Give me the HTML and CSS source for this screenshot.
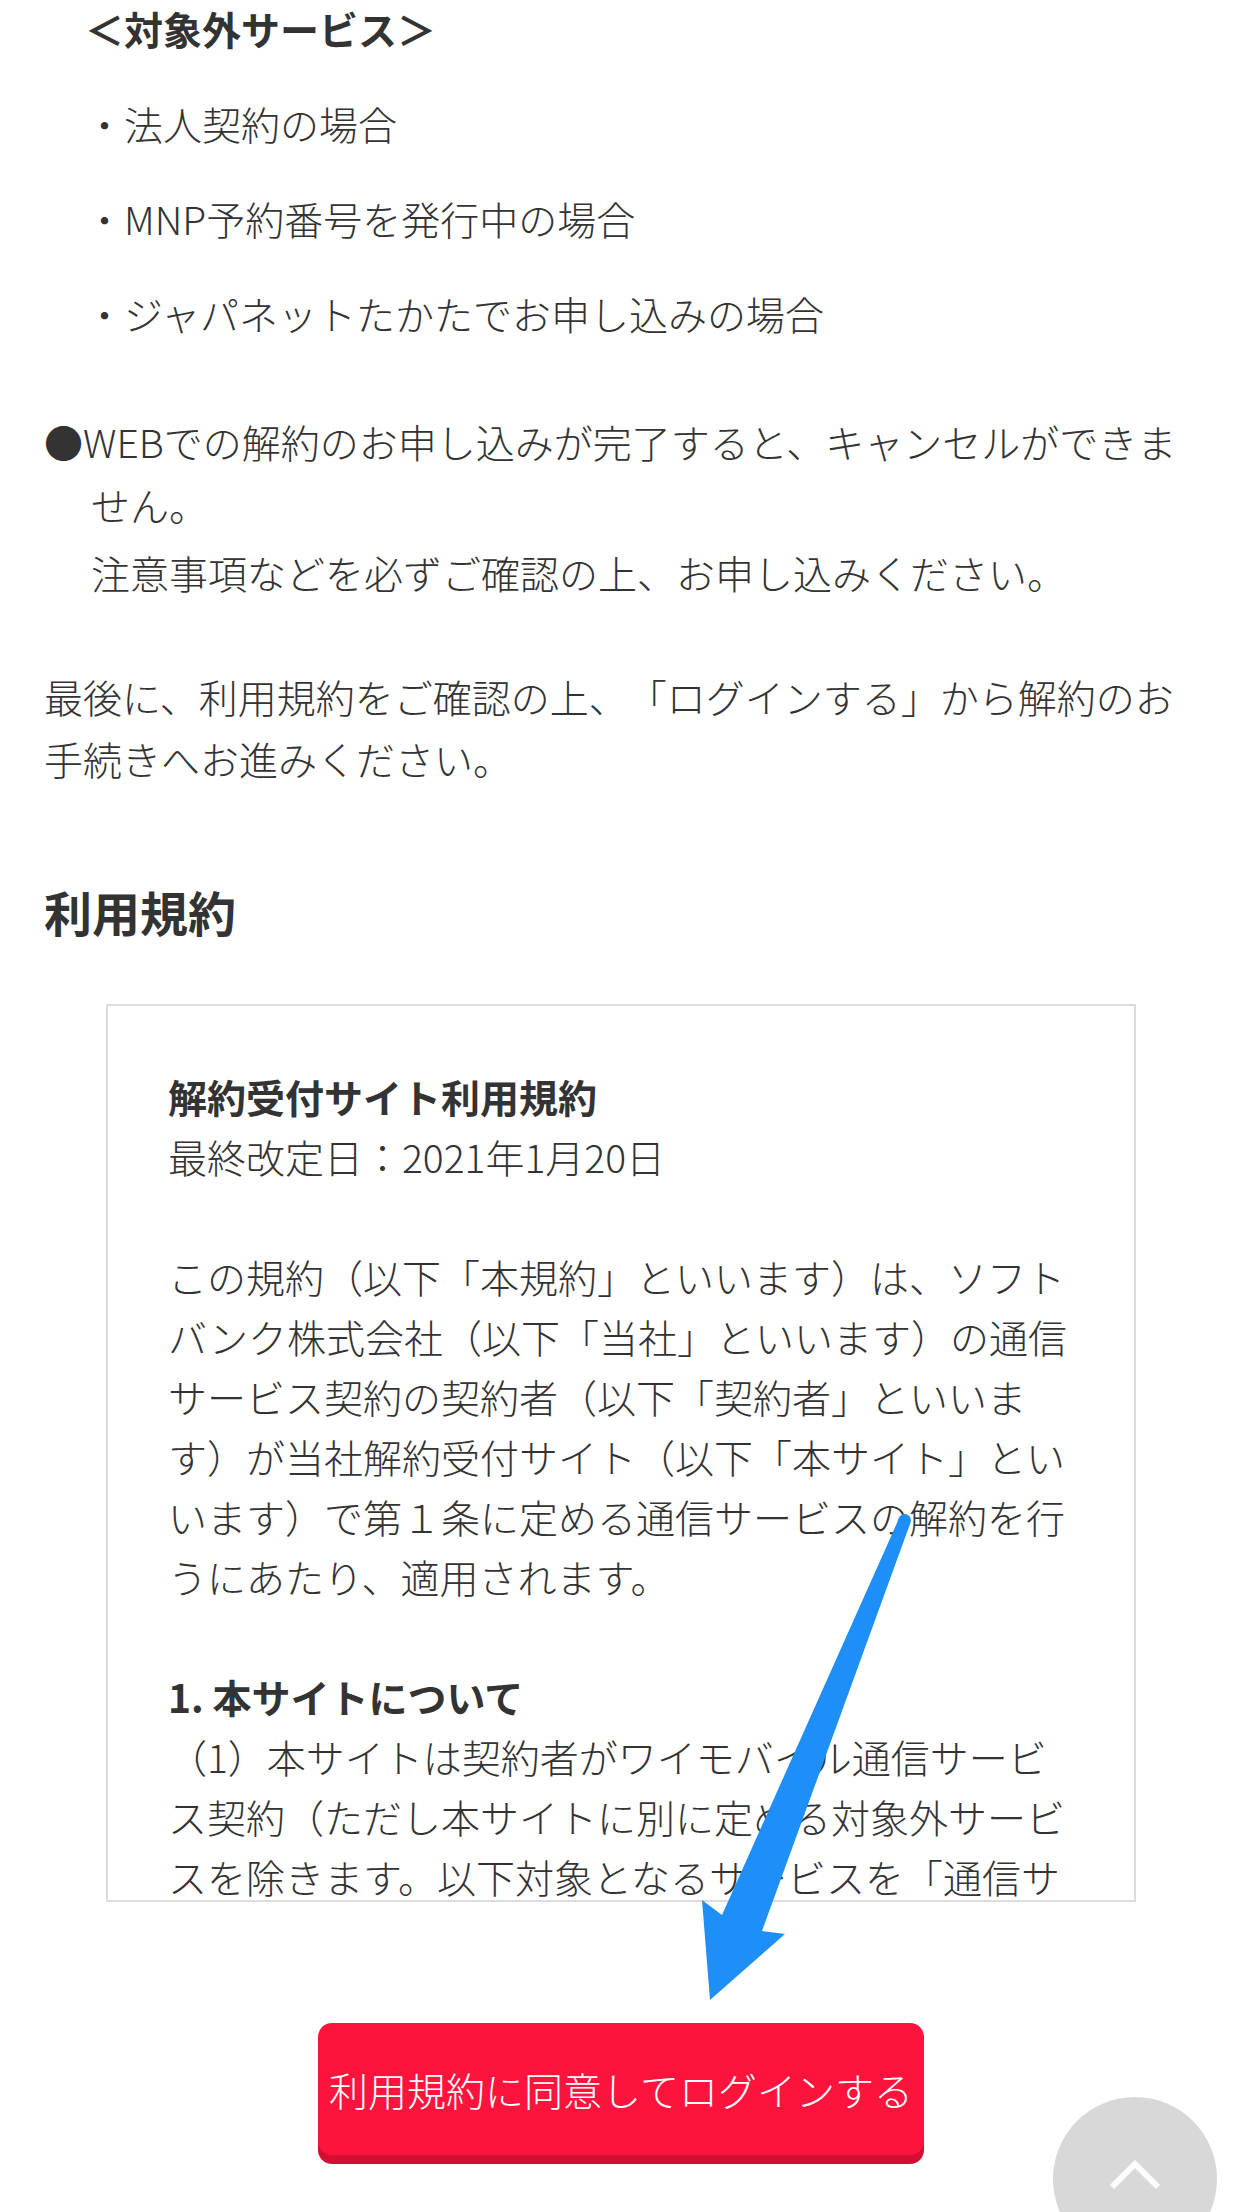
FILE: index.html
```html
<!DOCTYPE html>
<html lang="ja">
<head>
<meta charset="utf-8">
<title>解約受付サイト利用規約</title>
<link rel="stylesheet" href="styles.css">
</head>
<body>
<main class="page">
  <section class="excluded">
    <p class="excluded-title">＜対象外サービス＞</p>
    <p class="excluded-item">・法人契約の場合</p>
    <p class="excluded-item">・MNP予約番号を発行中の場合</p>
    <p class="excluded-item">・ジャパネットたかたでお申し込みの場合</p>
  </section>

  <div class="notice">
    <p class="notice-lead">●WEBでの解約のお申し込みが完了すると、キャンセルができません。</p>
    <p class="notice-note">注意事項などを必ずご確認の上、お申し込みください。</p>
  </div>

  <p class="closing">最後に、利用規約をご確認の上、「ログインする」から解約のお手続きへお進みください。</p>

  <h2 class="section-heading">利用規約</h2>

  <div class="terms">
    <p class="terms-title">解約受付サイト利用規約</p>
    <p>最終改定日：2021年1月20日</p>
    <p class="gap">この規約（以下「本規約」といいます）は、ソフトバンク株式会社（以下「当社」といいます）の通信サービス契約の契約者（以下「契約者」といいます）が当社解約受付サイト（以下「本サイト」といいます）で第１条に定める通信サービスの解約を行うにあたり、適用されます。</p>
    <p class="terms-heading gap">1. 本サイトについて</p>
    <p>（1）本サイトは契約者がワイモバイル通信サービス契約（ただし本サイトに別に定める対象外サービスを除きます。以下対象となるサービスを「通信サービス」といいます）について、解約の申込みを行うためのサイトです。</p>
    <p>（2）契約者は、本規約に同意の上、本サイトを利用するものとします。</p>
  </div>

  <div class="actions">
    <a class="agree-btn" href="#">利用規約に同意してログインする</a>
  </div>
</main>

<svg class="annotation" viewBox="0 0 1242 2212" aria-hidden="true">
  <path d="M897 1523 Q899 1513 906 1514 Q913 1517 910 1524 L762 1931 L785 1934 L710 2000 L702 1900 L722 1915 Z" fill="#1f8ff8"/>
</svg>

<a class="to-top" href="#" aria-label="ページの先頭へ">
  <svg viewBox="0 0 164 164" width="164" height="164" aria-hidden="true">
    <polyline points="59,90 82,67 105,90" fill="none" stroke="#fff" stroke-width="6"/>
  </svg>
</a>
</body>
</html>
```

FILE: styles.css
```css
html, body {
  margin: 0;
  padding: 0;
}

body {
  position: relative;
  width: 1242px;
  height: 2212px;
  overflow: hidden;
  background: #fff;
  color: #333;
  font-family: "Noto Sans CJK JP", "Noto Sans", sans-serif;
  font-size: 39px;
  font-weight: 300;
  text-spacing-trim: space-all;
}

p {
  margin: 0;
}

.page {
  padding: 0 44px;
}

.excluded {
  padding-left: 41px;
  margin-top: -3px;
}

.excluded-title {
  font-weight: 700;
  line-height: 62px;
}

.excluded-item {
  line-height: 62px;
  margin-top: 33px;
}

.notice {
  margin-top: 66px;
  padding-left: 47px;
  line-height: 63px;
}

.notice-lead {
  text-indent: -47px;
}

.notice-note {
  margin-top: 5px;
}

.closing {
  margin-top: 61px;
  line-height: 62px;
}

.section-heading {
  margin: 87px 0 0;
  font-size: 48px;
  font-weight: 700;
  line-height: 70px;
}

.terms {
  margin: 58px 62px 0;
  height: 898px;
  box-sizing: border-box;
  border: 2px solid #dcdcdc;
  padding: 60px 60px 0;
  overflow: hidden;
  line-height: 60px;
}

.terms .gap {
  margin-top: 60px;
}

.terms-title,
.terms-heading {
  font-weight: 700;
}

.actions {
  display: flex;
  justify-content: center;
  margin-top: 121px;
}

.agree-btn {
  display: flex;
  align-items: center;
  justify-content: center;
  width: 606px;
  height: 132px;
  border-radius: 14px;
  background: #fd143c;
  box-shadow: 0 9px 0 #d30f33;
  color: #fff;
  font-size: 39px;
  white-space: nowrap;
  text-decoration: none;
}

.annotation {
  position: absolute;
  left: 0;
  top: 0;
  width: 1242px;
  height: 2212px;
  pointer-events: none;
}

.to-top {
  position: fixed;
  right: 25px;
  top: 2097px;
  width: 164px;
  height: 164px;
  border-radius: 50%;
  background: #d8d8d8;
  display: block;
}

.to-top svg {
  display: block;
}
```
